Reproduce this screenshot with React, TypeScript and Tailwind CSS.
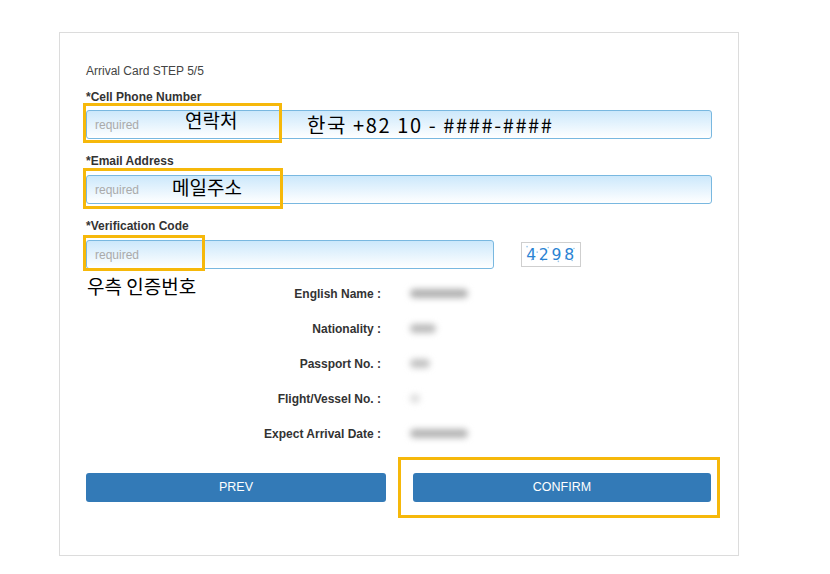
const INFO_ROWS: { label: string; w: string; tone: string }[] = [
  { label: 'English Name :', w: 'w-[58px]', tone: 'bg-[#b0b0b0]' },
  { label: 'Nationality :', w: 'w-[26px]', tone: 'bg-[#bbbbbb]' },
  { label: 'Passport No. :', w: 'w-[20px]', tone: 'bg-[#c2c2c2]' },
  { label: 'Flight/Vessel No. :', w: 'w-[10px]', tone: 'bg-[#dddddd]' },
  { label: 'Expect Arrival Date :', w: 'w-[58px]', tone: 'bg-[#b4b4b4]' },
]

const inputCls =
  'flex h-[29px] items-center rounded-[3px] border border-[#79b8e0] bg-gradient-to-b from-[#cce8fb] to-white px-[8px] text-[12px] text-[#aaaaaa]'

const NOISE = [
  [4, 4], [9, 18], [21, 19], [27, 5], [38, 20], [46, 17], [53, 19], [55, 6], [15, 10],
]

function Highlight({ className }: { className: string }) {
  return (
    <span
      className={`pointer-events-none absolute border-[3px] border-[#f6b80a] ${className}`}
    />
  )
}

function Captcha() {
  return (
    <svg width="60" height="25" viewBox="0 0 60 25" className="border border-[#cfcfcf]">
      {NOISE.map(([x, y]) => (
        <circle key={`${x}-${y}`} cx={x} cy={y} r="0.9" fill="#9cc6ea" />
      ))}
      <text
        x="3"
        y="18.5"
        fill="#2a83d3"
        fontSize="17"
        fontFamily="DejaVu Sans, sans-serif"
        letterSpacing="3"
      >
        4298
      </text>
    </svg>
  )
}

export default function App() {
  return (
    <div className="min-h-[574px] w-[830px] bg-white font-['Liberation_Sans',Arial,sans-serif] text-[#333]">
      <div className="ml-[59px] pt-[32px]">
        <div className="h-[524px] w-[680px] border border-[#dcdcdc] px-[26px] pt-[30px]">
          <p className="text-[12px] leading-[16px] text-[#444]">Arrival Card STEP 5/5</p>

          <p className="mt-[10px] text-[12px] font-bold leading-[16px]">*Cell Phone Number</p>
          <div className="relative mt-[5px]">
            <div className={inputCls}>required</div>
            {/* annotations drawn over the form */}
            <Highlight className="-left-[3px] -top-[7px] h-[40px] w-[199px]" />
            <span className="absolute left-[99px] top-[-2px] font-['Noto_Sans_CJK_KR',sans-serif] text-[19px] leading-[24px] text-black">
              연락처
            </span>
            <span className="absolute left-[221px] top-[3px] font-['Noto_Sans_CJK_KR',sans-serif] text-[20px] leading-[24px] tracking-[1.6px] text-black">
              한국 +82 10 - ####-####
            </span>
          </div>

          <p className="mt-[14px] text-[12px] font-bold leading-[16px]">*Email Address</p>
          <div className="relative mt-[6px]">
            <div className={inputCls}>required</div>
            <Highlight className="-left-[3px] -top-[7px] h-[41px] w-[200px]" />
            <span className="absolute left-[86px] top-[0px] font-['Noto_Sans_CJK_KR',sans-serif] text-[19px] leading-[24px] text-black">
              메일주소
            </span>
          </div>

          <p className="mt-[14px] text-[12px] font-bold leading-[16px]">*Verification Code</p>
          <div className="relative mt-[6px] flex items-center gap-[27px]">
            <div className={`${inputCls} w-[408px]`}>required</div>
            <Captcha />
            <Highlight className="-left-[3px] -top-[5px] h-[36px] w-[122px]" />
            <span className="absolute left-[1px] top-[34px] font-['Noto_Sans_CJK_KR',sans-serif] text-[19px] leading-[24px] text-black">
              우측 인증번호
            </span>
          </div>

          <div className="mt-[7px] flex flex-col">
            {INFO_ROWS.map((r) => (
              <div key={r.label} className="flex h-[35px] items-center gap-[29px]">
                <span className="w-[295px] text-right text-[12px] font-bold">{r.label}</span>
                <span className={`h-[9px] rounded-full blur-[3px] ${r.w} ${r.tone}`} />
              </div>
            ))}
          </div>

          <div className="mt-[22px] flex gap-[27px]">
            <button className="h-[29px] w-[300px] rounded-[3px] bg-[#337ab7] text-[12.5px] text-white">
              PREV
            </button>
            <div className="relative">
              <button className="h-[29px] w-[298px] rounded-[3px] bg-[#337ab7] text-[12.5px] text-white">
                CONFIRM
              </button>
              <Highlight className="-left-[15px] -top-[16px] h-[61px] w-[322px]" />
            </div>
          </div>
        </div>
      </div>
    </div>
  )
}
